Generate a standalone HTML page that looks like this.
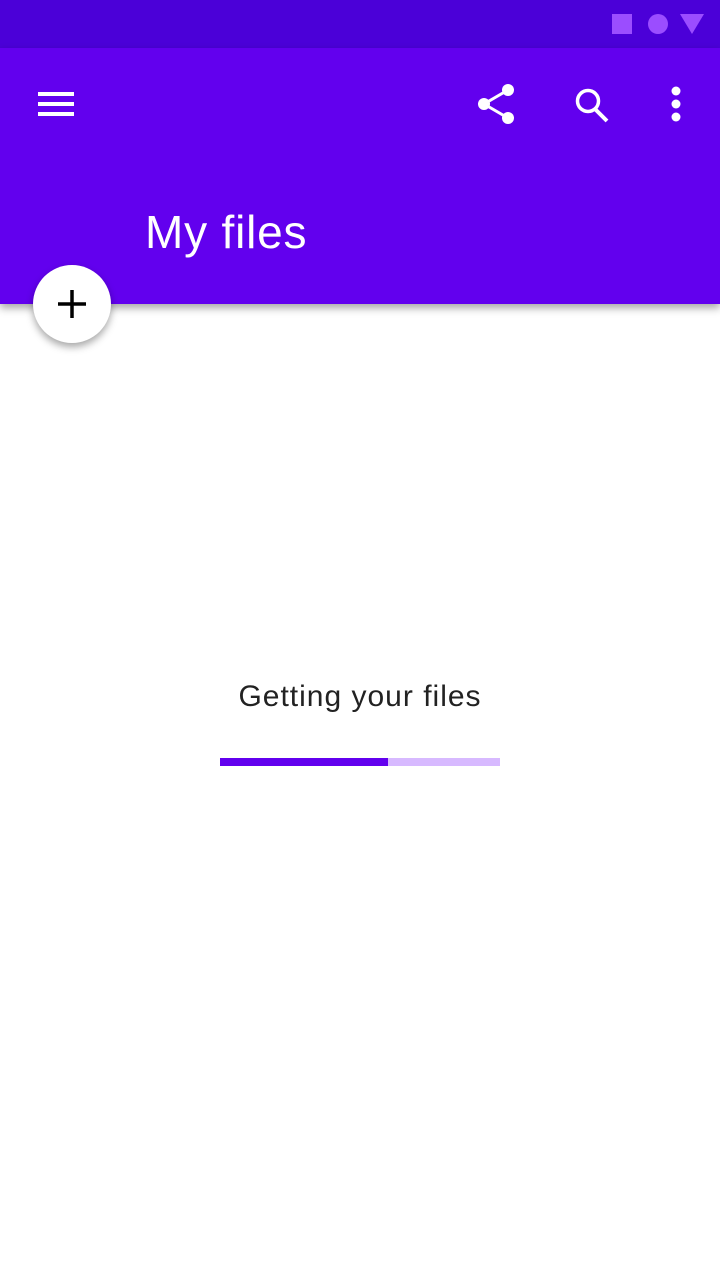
<!DOCTYPE html>
<html><head><style>
body{margin:0;width:720px;height:1280px;background:#fff;position:relative;overflow:hidden;font-family:"Liberation Sans",sans-serif}
.sb{position:absolute;top:0;left:0;width:720px;height:48px;background:#4b00d8}
.ab{position:absolute;top:48px;left:0;width:720px;height:256px;background:#6200ee;box-shadow:0 4px 8px rgba(0,0,0,.35)}
.t{position:absolute;left:145px;top:204px;color:#fff;font-size:46px;line-height:56px;letter-spacing:0.8px}
.fab{position:absolute;left:33px;top:265px;width:78px;height:78px;border-radius:50%;background:#fff;box-shadow:0 4px 8px rgba(0,0,0,.35)}
.msg{position:absolute;top:680px;left:0;width:720px;text-align:center;font-size:30px;letter-spacing:1px;color:#222}
</style></head><body>
<div class="sb"><svg width="720" height="48"><rect x="612" y="14" width="20" height="20" fill="#9b4dff"/><circle cx="658" cy="24" r="10" fill="#9b4dff"/><polygon points="680,14 704,14 692,34" fill="#9b4dff"/></svg></div>
<div class="ab"><svg width="720" height="120" style="position:absolute;top:0;left:0">
<g fill="#fff"><rect x="38" y="44" width="36" height="4"/><rect x="38" y="54" width="36" height="4"/><rect x="38" y="64" width="36" height="4"/>
<circle cx="508" cy="42" r="6"/><circle cx="484" cy="56" r="6"/><circle cx="508" cy="70" r="6"/>
<circle cx="676" cy="43" r="4.5"/><circle cx="676" cy="56" r="4.5"/><circle cx="676" cy="69" r="4.5"/></g>
<path d="M508 42L484 56L508 70" stroke="#fff" stroke-width="3" fill="none"/>
<circle cx="588" cy="53" r="10.5" stroke="#fff" stroke-width="3.5" fill="none"/><path d="M595 61L607 73" stroke="#fff" stroke-width="4"/>
</svg></div>
<div class="t">My files</div>
<div class="fab"><svg width="78" height="78"><path d="M39 25V53M25 39H53" stroke="#000" stroke-width="3.5"/></svg></div>
<div class="msg">Getting your files</div>
<div style="position:absolute;left:220px;top:758px;width:280px;height:8px;background:#d7b9ff"></div>
<div style="position:absolute;left:220px;top:758px;width:168px;height:8px;background:#6200ee"></div>
</body></html>
